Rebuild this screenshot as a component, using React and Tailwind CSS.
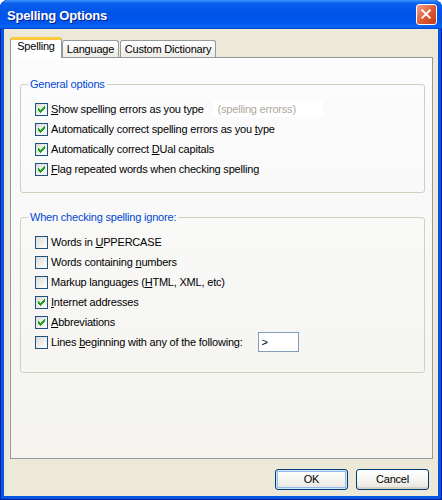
import React from 'react';

function Check({ checked }) {
  return (
    <span className="relative w-[13px] h-[13px] shrink-0 border border-[#1C5180] bg-linear-to-br from-[#DCDCD7] to-white">
      {checked && (
        <svg className="absolute left-[2px] top-[2px]" width="7" height="7" viewBox="0 0 7 7" shapeRendering="crispEdges" fill="#21A121">
          <rect x="6" y="0" width="1" height="1" />
          <rect x="5" y="1" width="2" height="1" />
          <rect x="0" y="2" width="1" height="1" />
          <rect x="4" y="2" width="3" height="1" />
          <rect x="0" y="3" width="2" height="1" />
          <rect x="3" y="3" width="3" height="1" />
          <rect x="0" y="4" width="5" height="1" />
          <rect x="1" y="5" width="3" height="1" />
          <rect x="2" y="6" width="1" height="1" />
        </svg>
      )}
    </span>
  );
}

function Row({ checked, children }) {
  return (
    <div className="h-[20px] flex items-center gap-[3px]">
      <Check checked={checked} />
      {children}
    </div>
  );
}

function Label({ children }) {
  return <span className="leading-[13px] whitespace-nowrap">{children}</span>;
}

function Group({ title, children, className }) {
  return (
    <fieldset className={'border border-[#D0D0BF] rounded-[3px] ' + className}>
      <legend className="ml-[7px] px-[2px] leading-[13px] text-[#0046D5]">{title}</legend>
      {children}
    </fieldset>
  );
}

function Btn({ children, def }) {
  return (
    <button
      className={
        'w-[73px] h-[21px] rounded-[3px] border border-[#003C74] bg-linear-to-b from-white via-[#F5F4F0] to-[#E6E5DE] leading-[13px] text-black ' +
        (def
          ? 'shadow-[inset_0_0_0_1px_#CEE7FF,inset_0_0_0_2px_#98B8EA]'
          : 'shadow-[inset_0_-2px_0_#D6D0C5]')
      }
    >
      {children}
    </button>
  );
}

export default function App() {
  return (
    <div className="w-[442px] h-[500px] flex flex-col rounded-t-[8px] overflow-hidden bg-[#0756E3] shadow-[inset_1px_0_0_#001EA0,inset_-1px_0_0_#001EA0,inset_0_-1px_0_#001EA0] font-['Liberation_Sans',Arial,sans-serif] text-[11px] tracking-[-0.2px] text-black">
      {/* title bar */}
      <div className="h-[29px] shrink-0 flex items-center justify-between pl-[7px] pr-[5px] bg-[linear-gradient(to_bottom,#3D95FF_0%,#0A60EE_12%,#0054E8_45%,#0058EE_80%,#0A66F5_92%,#0046D0_100%)]">
        <span className="mt-[2px] text-[13px] leading-[15px] font-bold text-white [text-shadow:1px_1px_0_#0A1E8A]">Spelling Options</span>
        <span className="w-[21px] h-[21px] rounded-[3px] border border-white bg-linear-to-br from-[#F0A48A] via-[#E05A34] to-[#C23B14] flex items-center justify-center">
          <svg width="21" height="21" viewBox="0 0 21 21">
            <path d="M6 6 L14 14 M14 6 L6 14" stroke="white" strokeWidth="2.2" strokeLinecap="square" />
          </svg>
        </span>
      </div>

      {/* body */}
      <div className="flex-1 mx-[4px] mb-[4px] bg-[#ECE9D8] flex flex-col">
        <div className="mt-[8px] h-[20px] flex items-end pl-[6px]">
          <div className="relative z-10 -mb-px h-[21px] w-[52px] bg-white border border-b-0 border-[#919B9C] border-t-[3px] border-t-[#FFC83C] rounded-t-[3px] flex justify-center leading-[13px]">
            Spelling
          </div>
          <div className="h-[17px] w-[57px] bg-linear-to-b from-white to-[#ECEBE6] border border-b-0 border-[#919B9C] rounded-t-[3px] flex justify-center pt-[2px] leading-[13px]">
            Language
          </div>
          <div className="ml-[1px] h-[17px] w-[96px] bg-linear-to-b from-white to-[#ECEBE6] border border-b-0 border-[#919B9C] rounded-t-[3px] flex justify-center pt-[2px] leading-[13px]">
            Custom Dictionary
          </div>
        </div>

        <div className="flex-1 ml-[6px] mr-[5px] border border-[#919B9C] bg-linear-to-b from-[#FCFCFE] to-[#F4F3EE] pl-[9px] pr-[7px]">
          <Group title="General options" className="mt-[20px]">
            <div className="pl-[14px] pt-[8px] pb-[13px]">
              <Row checked>
                <Label><span className="underline">S</span>how spelling errors as you type</Label>
                <span className="ml-[6px] w-[110px] h-[16px] bg-white pl-[5px] flex items-center text-[#ACA899] leading-[13px]">(spelling errorss)</span>
              </Row>
              <Row checked>
                <Label>Automatically correct spelling errors as you <span className="underline">t</span>ype</Label>
              </Row>
              <Row checked>
                <Label>Automatically correct <span className="underline">D</span>Ual capitals</Label>
              </Row>
              <Row checked>
                <Label><span className="underline">F</span>lag repeated words when checking spelling</Label>
              </Row>
            </div>
          </Group>

          <Group title="When checking spelling ignore:" className="mt-[18px]">
            <div className="pl-[14px] pt-[8px] pb-[20px]">
              <Row>
                <Label>Words in <span className="underline">U</span>PPERCASE</Label>
              </Row>
              <Row>
                <Label>Words containing <span className="underline">n</span>umbers</Label>
              </Row>
              <Row>
                <Label>Markup languages (<span className="underline">H</span>TML, XML, etc)</Label>
              </Row>
              <Row checked>
                <Label><span className="underline">I</span>nternet addresses</Label>
              </Row>
              <Row checked>
                <Label><span className="underline">A</span>bbreviations</Label>
              </Row>
              <Row>
                <Label>Lines <span className="underline">b</span>eginning with any of the following:</Label>
                <span className="ml-[12px] w-[41px] h-[20px] border border-[#7F9DB9] bg-white pl-[3px] flex items-center leading-[13px]">&gt;</span>
              </Row>
            </div>
          </Group>
        </div>

        <div className="h-[21px] mt-[10px] mb-[6px] flex justify-end gap-[8px] pr-[9px]">
          <Btn def>OK</Btn>
          <Btn>Cancel</Btn>
        </div>
      </div>
    </div>
  );
}
